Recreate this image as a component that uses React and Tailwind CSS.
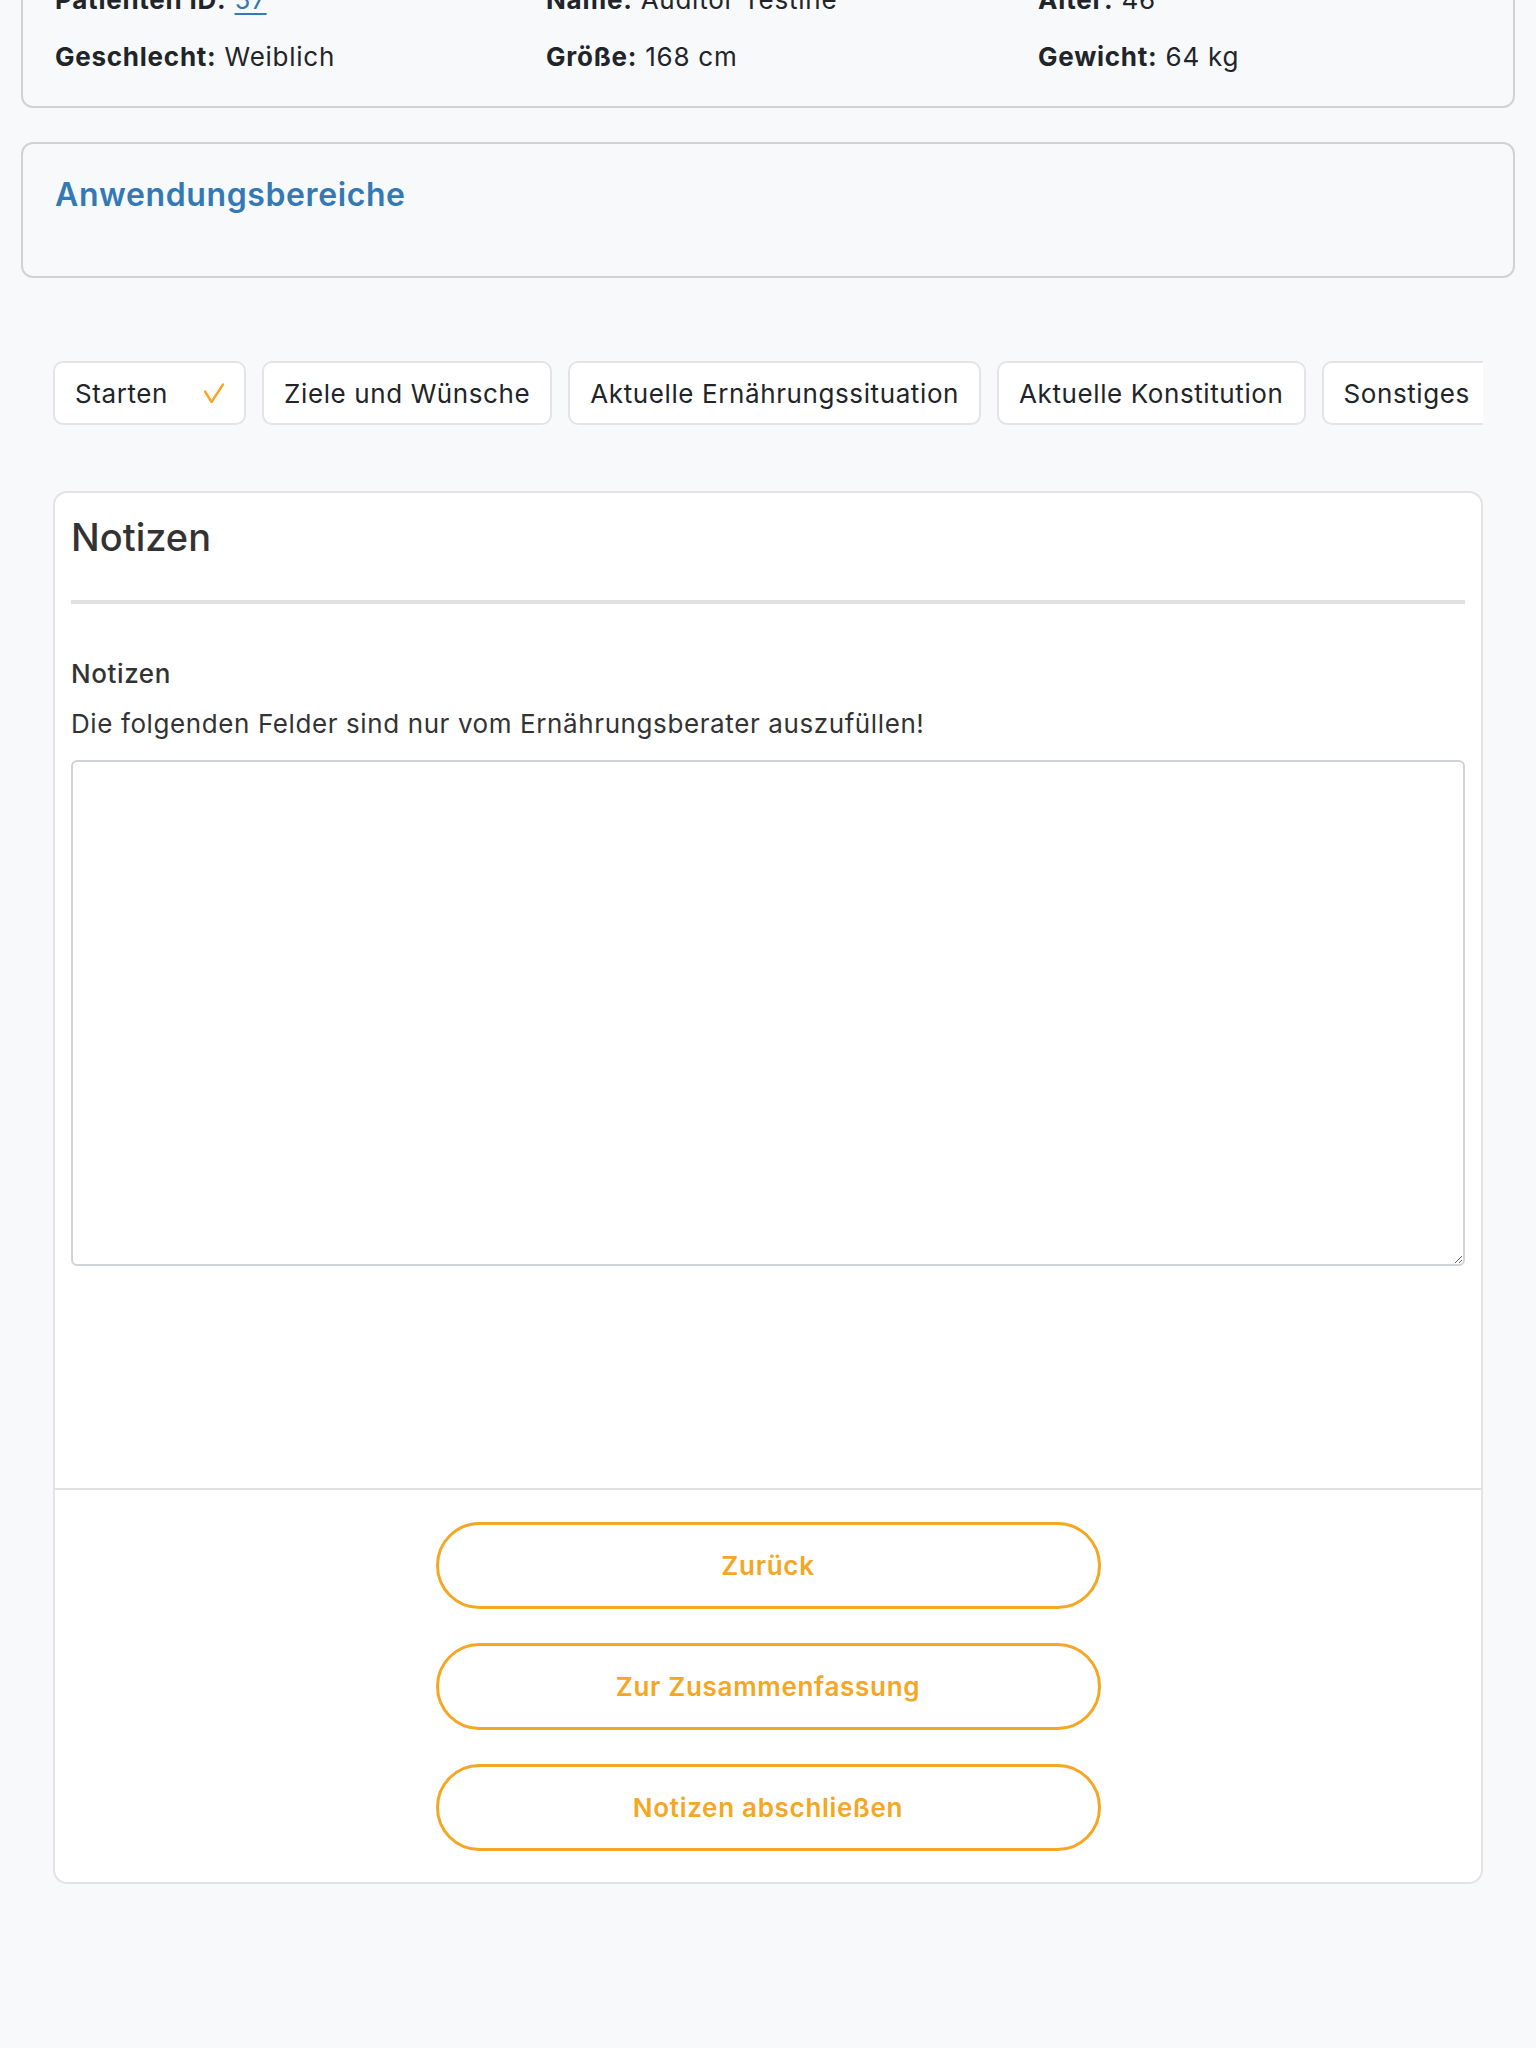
import { useState } from "react";

const patient = [
  { label: "Patienten ID:", value: "57", link: true },
  { label: "Name:", value: "Auditor Testine" },
  { label: "Alter:", value: "46" },
  { label: "Geschlecht:", value: "Weiblich" },
  { label: "Größe:", value: "168 cm" },
  { label: "Gewicht:", value: "64 kg" },
];

const steps = [
  { id: "start", name: "Starten", done: true },
  { id: "goals", name: "Ziele und Wünsche" },
  { id: "nutrition", name: "Aktuelle Ernährungssituation" },
  { id: "constitution", name: "Aktuelle Konstitution" },
  { id: "other", name: "Sonstiges" },
];

function CheckMark() {
  return (
    <svg width="20" height="20" viewBox="0 0 20 20" fill="none" className="shrink-0">
      <path
        d="M1 8.5 L7.5 19 L19 1.5"
        stroke="#f5a623"
        strokeWidth="2.4"
        strokeLinecap="round"
        strokeLinejoin="round"
      />
    </svg>
  );
}

function OutlineButton({ children, onClick }) {
  return (
    <button
      type="button"
      onClick={onClick}
      className="h-[87px] w-[665px] rounded-full border-[3px] border-[#f5a623] bg-white text-[26px] font-semibold tracking-[0.7px] text-[#f5a623] hover:bg-[#fff8ec]"
    >
      {children}
    </button>
  );
}

export default function App() {
  const [notes, setNotes] = useState("");

  return (
    <div className="min-h-[2048px] overflow-hidden bg-[#f8f9fb] font-['Inter','Noto_Sans',sans-serif] text-[#212529]">
      <div className="px-[21px]">
        {/* patient header */}
        <div className="-mt-[54px] rounded-xl border-2 border-[#d2d2d4] px-[32px] pt-[32px] pb-[30px]">
          <div className="grid grid-cols-[491px_492px_1fr] gap-y-[18px] text-[26px] leading-[39px] tracking-[0.75px]">
            {patient.map((p) => (
              <div key={p.label}>
                <span className="font-bold">{p.label}</span>{" "}
                {p.link ? (
                  <a href="#" className="text-[#3379b5] underline underline-offset-4">
                    {p.value}
                  </a>
                ) : (
                  p.value
                )}
              </div>
            ))}
          </div>
        </div>

        <div className="mt-[34px] rounded-xl border-2 border-[#d2d2d4] px-[32px] pt-[32px] pb-[62px]">
          <h2 className="text-[32px] font-semibold leading-[38px] tracking-[0.6px] text-[#3379b5]">
            Anwendungsbereiche
          </h2>
        </div>
      </div>

      <div className="px-[53px] pt-[83px]">
        {/* step tabs */}
        <div className="flex gap-[16px] overflow-hidden">
          {steps.map((s) => (
            <button
              key={s.id}
              type="button"
              className="flex h-[64px] shrink-0 items-center gap-[36px] rounded-[10px] border-2 border-[#e4e4e6] bg-white px-[20px] text-[26px] leading-[39px] tracking-[0.6px] text-[#212529]"
            >
              <span>{s.name}</span>
              {s.done ? <CheckMark /> : null}
            </button>
          ))}
        </div>

        <div className="mt-[66px] rounded-[14px] border-2 border-[#e3e3e5] bg-white">
          <div className="px-[16px] pt-[21px] pb-[222px]">
            <h3 className="text-[38px] font-medium leading-[46px] text-[#333]">Notizen</h3>
            <div className="mt-[40px] h-[4px] bg-[#e1e1e1]" />

            <label
              htmlFor="notes"
              className="mt-[50px] block text-[26px] font-medium leading-[39px] tracking-[0.6px] text-[#333]"
            >
              Notizen
            </label>
            <p className="mt-[11px] text-[26px] leading-[39px] tracking-[0.6px] text-[#333]">
              Die folgenden Felder sind nur vom Ernährungsberater auszufüllen!
            </p>
            <textarea
              id="notes"
              value={notes}
              onChange={(e) => setNotes(e.target.value)}
              className="mt-[17px] block h-[506px] w-full rounded-md border-2 border-[#d0d4d9] bg-white p-3 text-[26px] outline-none"
            />
          </div>

          <div className="flex flex-col items-center gap-[34px] border-t-2 border-[#e1e1e1] pt-[32px] pb-[31px]">
            <OutlineButton>Zurück</OutlineButton>
            <OutlineButton>Zur Zusammenfassung</OutlineButton>
            <OutlineButton>Notizen abschließen</OutlineButton>
          </div>
        </div>
      </div>
    </div>
  );
}
